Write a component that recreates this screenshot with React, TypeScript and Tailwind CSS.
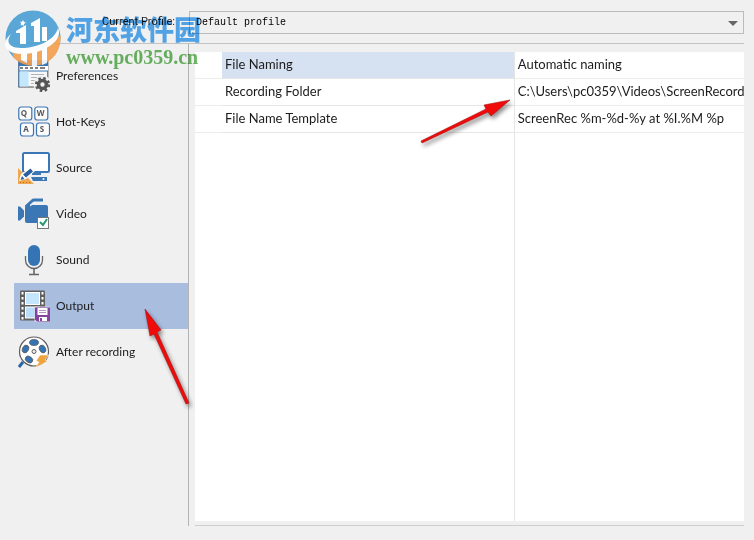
import React from 'react';

const PreferencesIcon = () => (
  <svg viewBox="0 0 32 32" className="size-8 shrink-0" aria-hidden="true">
    <rect x="0.8" y="1" width="29" height="26" fill="#f6f8fa" stroke="#64686d" strokeWidth="1.2" />
    <rect x="0.5" y="0.5" width="29.5" height="5.5" fill="#3a78b5" />
    <rect x="1" y="6" width="29" height="5" fill="#fff" />
    <path d="M1 6v21M1 11h29" stroke="#3a78b5" strokeWidth="1" />
    <rect x="1.5" y="11.5" width="9" height="15" fill="#c3e8fb" />
    <path d="M2 8h3M7 8h3M12 8h3M17 8h3M22 8h5" stroke="#555" strokeWidth="1.6" />
    <path d="M13 14.5h13M13 17.5h8M13 20.500h4M13 23.500h3" stroke="#b1b1b1" strokeWidth="1" />
    <path d="M24.500 15.500a9 9 0 1 0 .1 0z" fill="#f0f0f0" />
    <circle cx="24.500" cy="24.500" r="4" fill="none" stroke="#555" strokeWidth="3.600" />
    <circle cx="24.500" cy="24.500" r="6.300" fill="none" stroke="#555" strokeWidth="2.600" strokeDasharray="2.500 2.450" />
  </svg>
);

const HotKeysIcon = () => (
  <svg viewBox="0 0 32 32" className="size-8 shrink-0" aria-hidden="true">
    <g fill="#fcfcfc" stroke="#3b74b3" strokeWidth="1.200">
      <rect x="0.800" y="1" width="13" height="13" rx="2.500" />
      <rect x="16.800" y="1" width="13" height="13" rx="2.500" />
      <rect x="2.500" y="17" width="13" height="13" rx="2.500" />
      <rect x="18.500" y="17" width="13" height="13" rx="2.500" />
    </g>
    <g fill="#555" fontFamily="'Open Sans', sans-serif" fontSize="8" fontWeight="700" textAnchor="middle">
      <text x="6" y="10">Q</text>
      <text x="22.500" y="10">W</text>
      <text x="8" y="26">A</text>
      <text x="24" y="26">S</text>
    </g>
  </svg>
);

const SourceIcon = () => (
  <svg viewBox="0 0 32 32" className="size-8 shrink-0" aria-hidden="true">
    <rect x="5" y="1" width="26" height="19" rx="1.500" fill="#fff" stroke="#3b76b5" strokeWidth="2" />
    <path d="M14 21h9v2h-9zM13 25h16v4H15z" fill="#3b76b5" />
    <circle cx="25.500" cy="27" r="1" fill="#fff" />
    <path d="M0 16l16 16H0z" fill="#f0a64d" />
    <path d="M1 29l2-7 10-7 4 4-9 8z" fill="#fff" />
    <path d="M2.500 28l1.500-4 2.500 3zM5 22.500l7.500-6 2.500 3-7 6z" fill="#2b5f9e" />
    <path d="M2 30.500h11" stroke="#b16e22" strokeDasharray="1 2" />
  </svg>
);

const VideoIcon = () => (
  <svg viewBox="0 0 32 32" className="size-8 shrink-0" aria-hidden="true">
    <path d="M0 8.500h2l4 4v6l-4 4H0z" fill="#3b76b5" />
    <rect x="7" y="7" width="23" height="18" rx="2" fill="#3b76b5" />
    <path d="M8 8.500l6-5.500q1-1 2-1h9" fill="none" stroke="#3b76b5" strokeWidth="3" strokeLinejoin="round" />
    <path d="M12 8l3-2h10" fill="none" stroke="#f0f0f0" strokeWidth="1" />
    <rect x="19.500" y="19.500" width="11" height="11" fill="#fff" stroke="#777" />
    <path d="M22 24l3 3 4-6" fill="none" stroke="#28966b" strokeWidth="2" />
  </svg>
);

const SoundIcon = () => (
  <svg viewBox="0 0 32 32" className="size-8 shrink-0" aria-hidden="true">
    <rect x="10" y="1" width="12" height="21" rx="6" fill="#3574b4" />
    <path d="M7.500 12v4a8.500 8.500 0 0 0 17 0v-4" fill="none" stroke="#666" strokeWidth="1.300" />
    <path d="M16 24v6M11 30.500h10" stroke="#666" strokeWidth="1.600" />
  </svg>
);

const OutputIcon = () => (
  <svg viewBox="0 0 32 32" className="size-8 shrink-0" aria-hidden="true">
    <rect x="2" y="0.500" width="25" height="30" rx="1" fill="#606060" />
    <path d="M4.500 2v28M24.500 2v28" stroke="#fff" strokeWidth="2" strokeDasharray="2.500 2.500" />
    <rect x="7.500" y="2.500" width="14" height="12" fill="#c4e5fb" stroke="#fff" />
    <rect x="7.500" y="17" width="14" height="11" fill="#b9ddf8" stroke="#fff" />
    <path d="M16.500 16.500H32V32H16.500z" fill="#d9d2e8" />
    <path d="M17 17.500h15v14H19l-2-2z" fill="#84449d" />
    <path d="M19.500 18h10v7h-10zM21 27h8v4h-8z" fill="#fff" />
    <path d="M21 20.500h7M21 22.500h7" stroke="#84449d" strokeWidth="0.600" />
    <path d="M22 28h2v3h-2z" fill="#84449d" />
  </svg>
);

const AfterRecordingIcon = () => (
  <svg viewBox="0 0 32 32" className="size-8 shrink-0" aria-hidden="true">
    <path d="M1 31l4-5" stroke="#2b68a8" strokeWidth="3" />
    <circle cx="16" cy="15.500" r="14.500" fill="#fff" stroke="#5d5d5d" strokeWidth="1.200" />
    <g fill="#3574b4" stroke="#5d5d5d" strokeWidth="0.800">
      <ellipse cx="16" cy="6.500" rx="4.500" ry="3" />
      <ellipse cx="7.500" cy="13" rx="4" ry="3" transform="rotate(-65 7.500 13)" />
      <ellipse cx="24.500" cy="13" rx="4" ry="3" transform="rotate(65 24.500 13)" />
      <ellipse cx="11" cy="23.500" rx="4" ry="3" transform="rotate(35 11 23.500)" />
    </g>
    <circle cx="16" cy="15.500" r="2" fill="#eee" stroke="#5d5d5d" />
    <path d="M22 19h9l-4 5 3 1-13 7 4-6-3-1z" fill="#eda43c" stroke="#fff" strokeWidth="0.600" />
  </svg>
);

const sections = [
  { label: 'Preferences', Icon: PreferencesIcon },
  { label: 'Hot-Keys', Icon: HotKeysIcon },
  { label: 'Source', Icon: SourceIcon },
  { label: 'Video', Icon: VideoIcon },
  { label: 'Sound', Icon: SoundIcon },
  { label: 'Output', Icon: OutputIcon },
  { label: 'After recording', Icon: AfterRecordingIcon },
];

const properties = [
  { name: 'File Naming', value: 'Automatic naming' },
  { name: 'Recording Folder', value: 'C:\\Users\\pc0359\\Videos\\ScreenRecord' },
  { name: 'File Name Template', value: 'ScreenRec %m-%d-%y at %I.%M %p' },
];

const Watermark = () => (
  <>
    <svg viewBox="0 0 58 58" className="pointer-events-none absolute top-[9px] left-1 size-[58px] opacity-90" aria-hidden="true">
      <circle cx="29" cy="29" r="27.500" fill="#4a9fd4" />
      <path d="M8 42C28 44 46 36 56.500 26A27.500 27.500 0 0 1 10 49z" fill="#f5a04c" />
      {/* towers */}
      <path d="M12 22l10-6v19h-6V24h-4zM27 14l9-5v24h-6V17h-3zM38 18h5v14h-5z" fill="#fff" />
      <path d="M17 42h6v12l-6-3zM28 41h5v16h-5zM38 38h5v16l-5 2z" fill="#fff" />
      {/* orbit */}
      <path d="M7 25C1 34 6 39 17 39 34 39 51 31 54 19c6 12-14 26-36 26C-1 45-3 33 7 25z" fill="#fff" />
      <path d="M19 11l1 2 2 .5-2 1.500v2l-1.500-1-2 .5.700-2-1.200-1.800h2z" fill="#fff" />
    </svg>
    <div className="pointer-events-none absolute top-3 left-[66px] flex flex-col mix-blend-multiply">
      <span className="font-['Noto_Sans_CJK_SC',sans-serif] text-[27px] leading-[34px] font-black text-[#55acf4]">河东软件园</span>
      <span className="font-['Liberation_Serif',serif] text-[20px] leading-[22px] font-bold text-[#6bb863]">www.pc0359.cn</span>
    </div>
  </>
);

const Arrows = () => (
  <svg viewBox="0 0 754 540" className="pointer-events-none absolute top-0 left-0 w-[754px] drop-shadow-[2px_3px_2px_rgba(0,0,0,0.45)]" aria-hidden="true">
    <g fill="#f00a0a" stroke="#a31515" strokeWidth="0.600">
      <path d="M421 141l65-32-2-4 26-5-19 16-3-4-66 31z" />
      <path d="M145 309l16 21-4 2 32 71-3 1-32-70-4 2z" />
    </g>
  </svg>
);

const App = () => {
  const [active, setActive] = React.useState('Output');

  return (
    <div className="relative flex min-h-screen flex-col overflow-hidden bg-[#f0f0f0] pt-[11px] pr-[10px] pb-[14px] pl-[14px] font-['Lato',sans-serif] text-[13px] text-[#1c1c1c]">
      <header className="flex items-center border-b border-[#c2c2c2] pb-[9px]">
        <label htmlFor="profile" className="w-[175px] pr-[14px] text-right font-['Roboto',sans-serif] text-[11px] whitespace-nowrap">Current Profile:</label>
        <div className="relative flex-1">
          <select id="profile" className="block h-[23px] w-full appearance-none border border-[#bcbcbc] bg-[#f0f0f0] px-1.5 font-['Liberation_Mono',monospace] text-[10px] text-black">
            <option>Default profile</option>
          </select>
          <svg viewBox="0 0 10 5" className="pointer-events-none absolute top-[10px] right-[6px] h-[5px] w-[10px]" aria-hidden="true">
            <path d="M0 0h10L5 5z" fill="#666" />
          </svg>
        </div>
      </header>

      <div className="flex flex-1">
        <nav className="flex w-[175px] shrink-0 flex-col border-r border-[#b4b4b4] pt-[9px]">
          {sections.map(({ label, Icon }) => (
            <button
              key={label}
              type="button"
              onClick={() => setActive(label)}
              className={`flex h-[46px] items-center gap-1.5 pl-1 text-left text-[12px] ${active === label ? 'bg-[#a9bddf]' : ''}`}
            >
              <Icon />
              {label}
            </button>
          ))}
        </nav>

        <main className="ml-1.5 flex min-w-0 flex-1 flex-col border-b border-[#cfcfcf] pt-2 pb-1">
          <div className="flex flex-1 bg-white">
            <table className="w-full table-fixed border-separate border-spacing-0 text-left whitespace-nowrap">
              <colgroup>
                <col className="w-[27px]" />
                <col className="w-8/15" />
                <col />
              </colgroup>
              <tbody>
                {properties.map(({ name, value }, i) => (
                  <tr key={name} className="h-[27px]">
                    <td className="border-b border-[#ececec]" />
                    <th scope="row" className={`border-r border-b border-[#e6e6e6] pl-[3px] font-normal ${i === 0 ? 'bg-[#d6e1f2]' : ''}`}>{name}</th>
                    <td className="overflow-hidden border-b border-[#ececec] pl-[3px]">{value}</td>
                  </tr>
                ))}
                <tr>
                  <td />
                  <td className="border-r border-[#e6e6e6]" />
                  <td />
                </tr>
              </tbody>
            </table>
          </div>
        </main>
      </div>

      <Watermark />
      <Arrows />
    </div>
  );
};

export default App;
